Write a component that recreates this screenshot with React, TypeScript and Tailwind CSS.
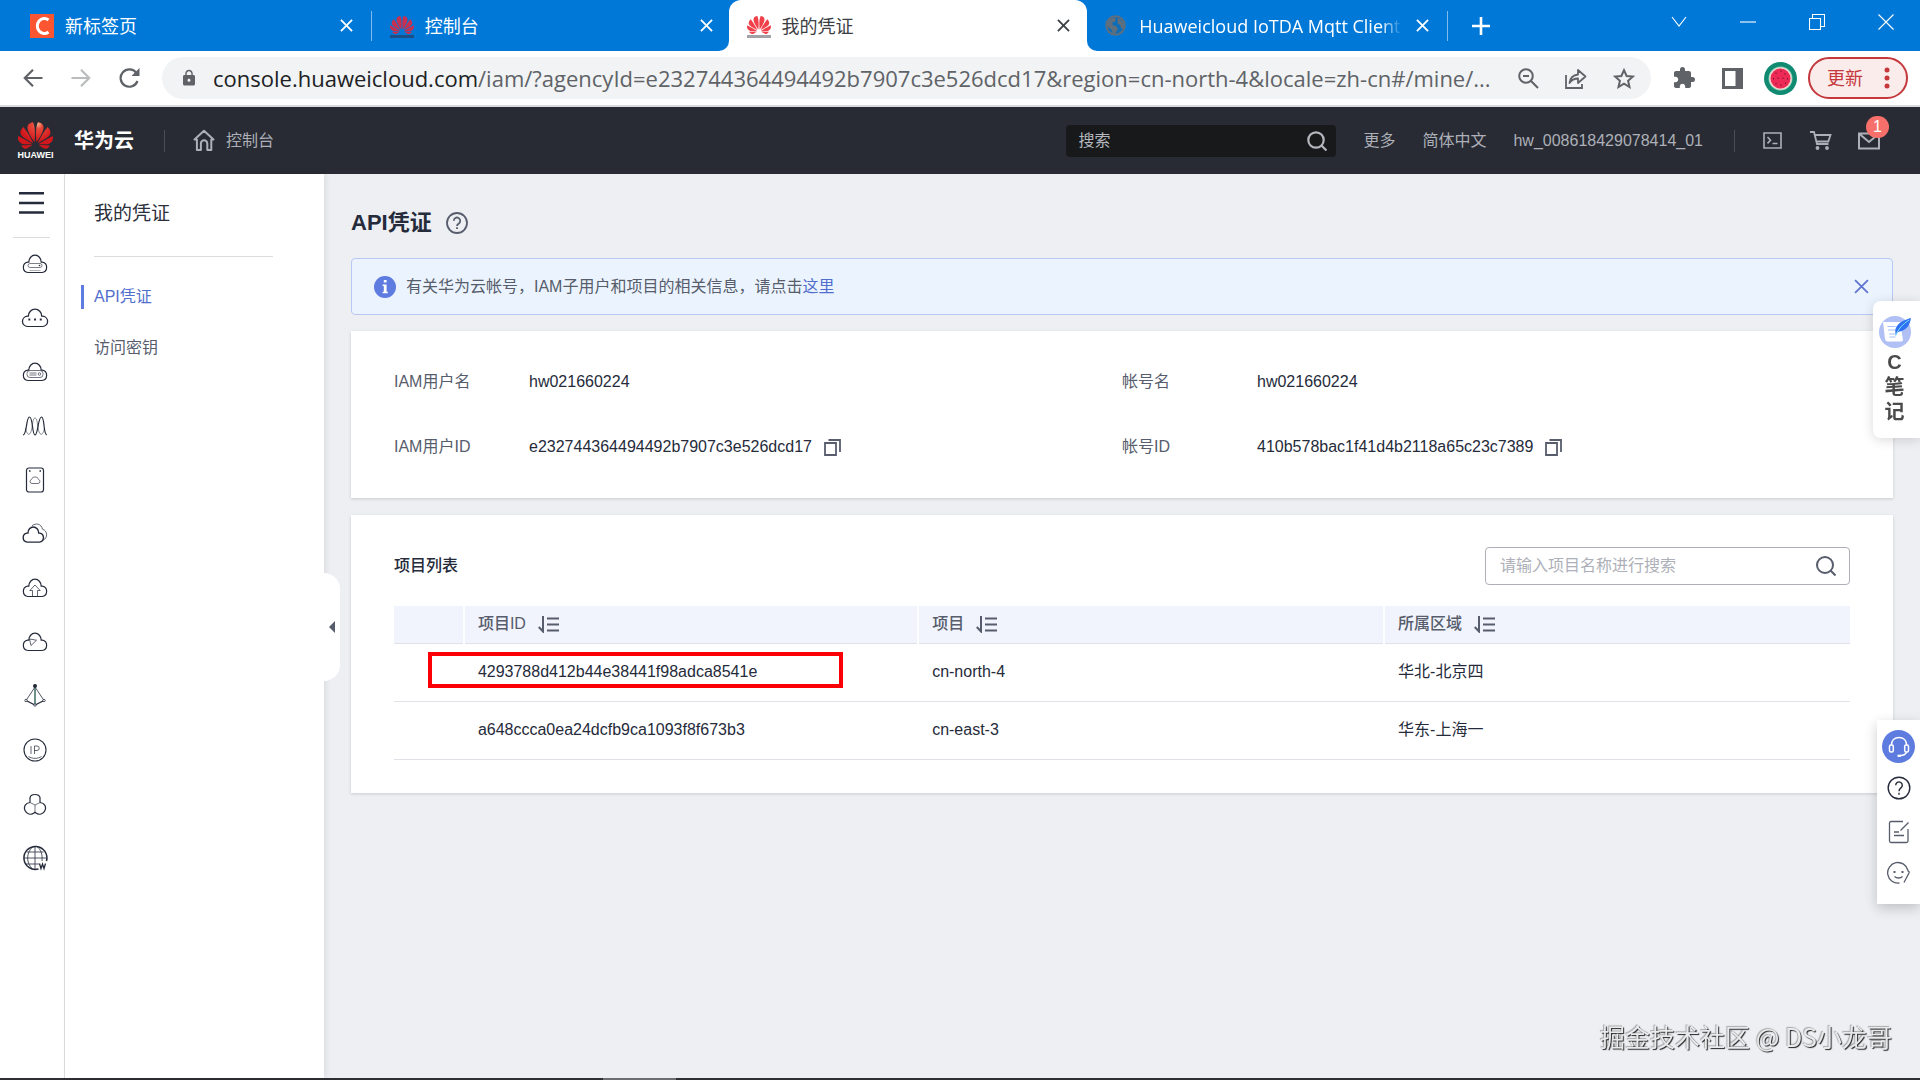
import React from "react";
import { SiHuawei } from "react-icons/si";
import { MdExtension, MdLock } from "react-icons/md";

const UI = "font-['Liberation_Sans','Noto_Sans_CJK_SC',sans-serif]";
const CHROME = "font-['Open_Sans','Noto_Sans_CJK_SC',sans-serif]";

const CLOUD = "M6 18.5H20A5.2 5.2 0 0 0 20.3 8.2H19.2A6.2 7 0 0 0 6.800 8.2H5.7A5.2 5.2 0 0 0 6 18.5z";

function CloseX({ size, width = 2 }: { size: number; width?: number }) {
  return (
    <svg width={size} height={size} viewBox="0 0 14 14" fill="none" stroke="currentColor" strokeWidth={width} aria-hidden="true">
      <path d="M1 1l12 12M13 1L1 13" />
    </svg>
  );
}

function HuaweiFavicon({ dim = false }: { dim?: boolean }) {
  return (
    <span className="flex w-6 shrink-0 flex-col items-center">
      <SiHuawei size={24} className={dim ? "-mb-0.5 text-[#c7304f]" : "-mb-0.5 text-[#f0404a]"} aria-hidden="true" />
      <span className={dim ? "h-[3px] w-6 bg-[#1c4f86]" : "h-[3px] w-6 bg-[#a2a2a6]"} />
    </span>
  );
}

function Tab({ icon, title, label, active = false }: { icon: React.ReactNode; title: string; label: string; active?: boolean }) {
  return (
    <div
      role="tab"
      aria-selected={active}
      className={
        active
          ? "relative -ml-0.5 flex h-full min-w-0 flex-1 items-center rounded-t-xl bg-white pr-4 pl-[18px] text-[#3c4043]"
          : "flex h-full min-w-0 flex-1 items-center pr-4 pl-[18px] text-white"
      }
    >
      {active && (
        <>
          <svg width="10" height="10" viewBox="0 0 10 10" className="absolute right-full bottom-0" aria-hidden="true">
            <path d="M10 0v10H0A10 10 0 0 0 10 0z" fill="#fff" />
          </svg>
          <svg width="10" height="10" viewBox="0 0 10 10" className="absolute bottom-0 left-full" aria-hidden="true">
            <path d="M0 0v10h10A10 10 0 0 1 0 0z" fill="#fff" />
          </svg>
        </>
      )}
      {icon}
      <span className="ml-[11px] min-w-0 flex-1 overflow-hidden text-[18px] leading-[26px] whitespace-nowrap">{title}</span>
      <button type="button" aria-label={label} className="ml-3 flex h-5 w-4 shrink-0 items-center justify-center">
        <CloseX size={13} />
      </button>
    </div>
  );
}

function TabBar() {
  return (
    <div className="flex h-[51px] items-stretch bg-[#0078d7] text-white">
      <div role="tablist" aria-label="标签页" className="flex w-[1448px] min-w-0 items-center pl-3">
        <Tab
          label="关闭新标签页"
          title="新标签页"
          icon={
            <span className="flex h-6 w-6 shrink-0 items-center justify-center bg-[#fc5531]">
              <svg width="18" height="20" viewBox="0 0 18 20" fill="none" stroke="#fff" strokeWidth="3" aria-hidden="true">
                <path d="M15.5 4A7 7.5 0 1 0 15.5 16" />
              </svg>
            </span>
          }
        />
        <span className="h-[30px] w-px shrink-0 bg-[#7fbbec]" />
        <Tab label="关闭控制台" title="控制台" icon={<HuaweiFavicon dim />} />
        <Tab active label="关闭我的凭证" title="我的凭证" icon={<HuaweiFavicon />} />
        <div role="tab" aria-selected={false} className="flex h-full min-w-0 flex-1 items-center pr-[17px] pl-[18px]">
          <svg width="21" height="21" viewBox="0 0 21 21" className="shrink-0" aria-hidden="true">
            <circle cx="10.5" cy="10.5" r="9.2" fill="#0f6db8" stroke="#5f6f7d" strokeWidth="2" />
            <path d="M3 6l5-3.5 3 1-1 3-3 1.5 1 2.5 3 .5 2 3-2 3-1.5 2.5-2-1-.5-3.5-3-2-2.5-3zM13 3l4 3 2 4-1 4-2-1-.5-3-2.5-1-.5-3z" fill="#5f6f7d" />
          </svg>
          <span className="ml-[13px] min-w-0 flex-1 mask-r-from-92% text-[18px] leading-[26px] whitespace-nowrap">
            Huaweicloud IoTDA Mqtt Client
          </span>
          <button type="button" aria-label="关闭 Huaweicloud IoTDA" className="ml-3 flex h-5 w-4 shrink-0 items-center justify-center">
            <CloseX size={13} />
          </button>
        </div>
        <span className="h-[30px] w-px shrink-0 bg-[#7fbbec]" />
      </div>
      <button type="button" aria-label="新建标签页" className="ml-6 flex w-[18px] items-center justify-center">
        <svg width="18" height="18" viewBox="0 0 18 18" stroke="currentColor" strokeWidth="2.6" aria-hidden="true">
          <path d="M9 0v18M0 9h18" />
        </svg>
      </button>
      <div className="ml-auto flex h-[43px] items-stretch">
        {[
          ["搜索标签页", "M1 3l7 9 7-9"],
          ["最小化", "M0 8h16"],
          ["还原", "M.5 4.5h11v11h-11zM3.5 4V.5h12v12h-3.5"],
          ["关闭", "M.5.5l15 15M15.5.5l-15 15"],
        ].map(([name, d]) => (
          <button key={name} type="button" aria-label={name} className="flex w-[69px] items-center justify-center">
            <svg width="16" height="16" viewBox="0 0 16 16" fill="none" stroke="currentColor" strokeWidth="1.1" aria-hidden="true">
              <path d={d} />
            </svg>
          </button>
        ))}
      </div>
    </div>
  );
}

function IconButton({ label, className, children }: { label: string; className: string; children: React.ReactNode }) {
  return (
    <button type="button" aria-label={label} className={"flex shrink-0 items-center justify-center " + className}>
      {children}
    </button>
  );
}

function Toolbar() {
  return (
    <div className="flex h-14 items-center border-b-2 border-[#dadbdc] bg-white pr-3 pl-[21px] text-[#5f6368]">
      <IconButton label="后退" className="w-6">
        <svg width="20" height="18" viewBox="0 0 20 18" fill="none" stroke="#5f6368" strokeWidth="2.2">
          <path d="M19.5 9H2M10 .8L1.8 9l8.2 8.2" />
        </svg>
      </IconButton>
      <IconButton label="前进" className="ml-6 w-6">
        <svg width="20" height="18" viewBox="0 0 20 18" fill="none" stroke="#babcbe" strokeWidth="2.2">
          <path d="M.5 9H18M10 .8L18.2 9 10 17.2" />
        </svg>
      </IconButton>
      <IconButton label="重新加载" className="ml-6 w-6">
        <svg width="21" height="20" viewBox="0 0 21 20" fill="none" stroke="#5f6368" strokeWidth="2.2">
          <path d="M18.5 13A8.7 8.700 0 1 1 17.3 4.8L19 6.5" />
          <path d="M20.5 0v8h-8z" fill="#5f6368" stroke="none" />
        </svg>
      </IconButton>
      <div className="ml-[21px] flex h-[42px] min-w-0 flex-1 items-center rounded-full bg-[#f1f3f4] pr-[15px] pl-[18px]">
        <MdLock size={18} className="shrink-0 text-[#5f6368]" aria-hidden="true" />
        <div role="textbox" tabIndex={0} aria-label="地址栏" className="ml-[15px] min-w-0 flex-1 overflow-hidden text-[22px] leading-[30px] whitespace-nowrap">
          <span className="text-[#202124]">console.huaweicloud.com</span>
          <span>/iam/?agencyId=e232744364494492b7907c3e526dcd17&amp;region=cn-north-4&amp;locale=zh-cn#/mine/...</span>
        </div>
        <IconButton label="缩放" className="w-6">
          <svg width="21" height="21" viewBox="0 0 21 21" fill="none" stroke="#5f6368" strokeWidth="2">
            <circle cx="8" cy="8" r="6.8" />
            <path d="M13 13l7 7M5 8h6" />
          </svg>
        </IconButton>
        <IconButton label="分享" className="ml-6 w-6">
          <svg width="22" height="21" viewBox="0 0 22 21" fill="none" stroke="#5f6368" strokeWidth="1.8">
            <path d="M1 7v13h16v-4" />
            <path d="M4.5 15c.7-5 3.8-8 8.5-8.5V2l7.5 6.5-7.5 6.5v-4.5c-3.5 0-6.5 1.5-8.5 4.5z" strokeLinejoin="round" />
          </svg>
        </IconButton>
        <IconButton label="收藏" className="ml-6 w-6">
          <svg width="22" height="21" viewBox="0 0 22 21" fill="none" stroke="#5f6368" strokeWidth="2">
            <path d="M11 2.2l2.6 5.8 6.3.6-4.8 4.2 1.4 6.2L11 15.7 5.5 19l1.4-6.2L2.1 8.6 8.400 8z" />
          </svg>
        </IconButton>
      </div>
      <IconButton label="扩展程序" className="ml-[21px] w-6">
        <MdExtension size={24} />
      </IconButton>
      <IconButton label="侧边栏" className="ml-6 w-6">
        <svg width="21" height="21" viewBox="0 0 21 21" fill="none" stroke="#5f6368" strokeWidth="3">
          <path d="M1.5 1.5h18v18h-18z" />
          <path d="M13.5 1h7v19h-7z" fill="#5f6368" stroke="none" />
        </svg>
      </IconButton>
      <IconButton label="个人资料" className="ml-5 w-[33px]">
        <svg width="33" height="33" viewBox="0 0 33 33">
          <circle cx="16.5" cy="16.5" r="16.5" fill="#118a72" />
          <circle cx="16.5" cy="16.5" r="12" fill="#7fd1b5" />
          <circle cx="16.5" cy="16.5" r="11.3" fill="#f2d5cf" />
          <circle cx="16.5" cy="16.5" r="10" fill="#ec2a55" />
          <path d="M12 10.5v1.5M17 8.5v1.5M21 11v1.5M9.5 16v1.5M14 15.5V17M19 15.5V17M23.5 16v1.5M12 21v1.5M17 22.5V24M21.5 20.5V22" stroke="#7a1631" strokeWidth="1" />
        </svg>
      </IconButton>
      <button type="button" className="ml-[11px] flex h-[42px] w-[100px] shrink-0 items-center rounded-full border-2 border-[#c5383c] bg-[#fbecec] pl-[17px] text-[18px] leading-[26px] text-[#c5383c]">
        更新
        <svg width="6" height="26" viewBox="0 0 6 26" fill="currentColor" className="ml-[21px]" aria-hidden="true">
          <circle cx="3" cy="5" r="2.5" />
          <circle cx="3" cy="13" r="2.5" />
          <circle cx="3" cy="21" r="2.5" />
        </svg>
      </button>
    </div>
  );
}

function ConsoleHeader() {
  return (
    <header className="flex h-[67px] items-center bg-[#282b33] pr-10 pl-[18px] text-[16px] text-[#adb0b8]">
      <a href="#home" className="flex items-center">
        <span className="flex w-[35px] flex-col items-center">
          <svg width="0" height="0" aria-hidden="true">
            <defs>
              <radialGradient id="petals" gradientUnits="userSpaceOnUse" cx="13.5" cy="4" r="12">
                <stop offset="0" stopColor="#f7b28a" />
                <stop offset=".3" stopColor="#e8493a" />
                <stop offset="1" stopColor="#d2171c" />
              </radialGradient>
            </defs>
          </svg>
          <SiHuawei size={35} className="-mt-1 -mb-0.5 [&_path]:fill-[url(#petals)]" aria-hidden="true" />
          <span className="text-[9px] leading-[9px] font-bold text-white">HUAWEI</span>
        </span>
        <span className="ml-[21px] text-[20px] leading-7 font-bold text-white">华为云</span>
      </a>
      <span className="ml-[30px] h-[22px] w-px bg-[#4a4d55]" />
      <a href="#console" className="ml-7 flex items-center leading-6">
        <svg width="22" height="23" viewBox="0 0 22 23" fill="none" stroke="currentColor" strokeWidth="2" aria-hidden="true">
          <path d="M1.5 10.5L11 1.8l9.5 8.7h-2.2v10.5h-4v-6.5a3.2 3.2 0 0 0-6.4 0v6.5h-4V10.5z" strokeLinejoin="round" />
        </svg>
        <span className="ml-[11px]">控制台</span>
      </a>
      <label className="ml-auto flex h-8 w-[270px] items-center rounded-sm bg-[#17191b] pr-[9px] pl-3">
        <input type="text" aria-label="搜索" placeholder="搜索" className="min-w-0 flex-1 bg-transparent leading-6 placeholder:text-[#b4b7bd] focus:outline-none" />
        <svg width="20" height="20" viewBox="0 0 20 20" fill="none" stroke="#b4b7bd" strokeWidth="2.2" aria-hidden="true">
          <circle cx="9" cy="9" r="7.7" />
          <path d="M14.5 14.5l5 5" />
        </svg>
      </label>
      <nav className="ml-[27px] flex items-center leading-6">
        <a href="#more">更多</a>
        <a href="#lang" className="ml-[27px]">简体中文</a>
        <a href="#account" className="ml-[27px]">hw_008618429078414_01</a>
      </nav>
      <span className="ml-[31px] h-[22px] w-px bg-[#4a4d55]" />
      <IconButton label="CloudShell" className="ml-[28px] w-[19px]">
        <svg width="19" height="17" viewBox="0 0 19 17" fill="none" stroke="currentColor" strokeWidth="1.6">
          <path d="M1 1h17v15H1zM4.5 5l3 3.2-3 3.2M9.500 11.5h5" />
        </svg>
      </IconButton>
      <IconButton label="购物车" className="ml-[28px] w-[22px]">
        <svg width="22" height="19" viewBox="0 0 22 19" fill="none" stroke="currentColor" strokeWidth="1.8">
          <path d="M0 1h4l3 12h11.5M5 4h15.5l-2.2 6.5H6.5" />
          <circle cx="7.5" cy="17" r="1" fill="currentColor" />
          <circle cx="17" cy="17" r="1" fill="currentColor" />
        </svg>
      </IconButton>
      <IconButton label="消息" className="relative ml-[26px] w-[22px]">
        <svg width="22" height="18" viewBox="0 0 22 18" fill="none" stroke="currentColor" strokeWidth="2">
          <path d="M1 1.5h20v15H1zM1.5 2l9.5 8 9.5-8" />
        </svg>
        <span className="absolute -top-4 left-2 flex h-[22px] w-[23px] items-center justify-center rounded-full bg-[#f66f6a] text-[16px] leading-none text-white">1</span>
      </IconButton>
    </header>
  );
}

const SERVICES: { name: string; art: React.ReactNode }[] = [
  { name: "弹性云服务器", art: <><path d={CLOUD} /><g strokeWidth=".8" opacity=".75"><rect x="6" y="9.500" width="14" height="4" rx="2" /><path d="M7.500 16.5h11" opacity=".6" /></g><circle cx="17.5" cy="11.5" r=".8" fill="currentColor" stroke="none" /></> },
  { name: "云耀云服务器", art: <g transform="translate(-1 0) scale(1.08 1)"><path d={CLOUD} /><path d="M6.800 11.500h1.800M12.100 11.500h1.800M17.400 11.500h1.800" strokeWidth="2" /></g> },
  { name: "裸金属服务器", art: <><path d={CLOUD} /><g strokeWidth=".8" opacity=".8"><rect x="5" y="8.500" width="16" height="7" rx="3" /><path d="M7.500 11h7M7.500 13h7" /><circle cx="17.5" cy="12" r="1.3" /></g></> },
  { name: "弹性伸缩", art: <><path d="M1 19C5 19 4 1 7.500 1S10 19 13 19 16 1 19.500 1 21 19 25 19" /><path d="M3.500 12C5 20 9 22 10.500 8c.8-8 4.200-8 5 0 1.500 14 5.500 12 7 4" strokeWidth=".8" opacity=".7" /></> },
  { name: "云硬盘", art: <><rect x="4.500" y="-2" width="17" height="24" rx="2.500" /><path d="M10 13.500h6a2 2 0 0 0 .6-3.900c-.6-1.900-2-2.600-3.600-2.600s-3 .7-3.600 2.600a2 2 0 0 0 .6 3.900z" strokeWidth=".8" opacity=".8" /><path d="M7 1h1.500M17.500 1H19" strokeWidth="1.500" /></> },
  { name: "云备份", art: <><g transform="translate(0 2) scale(.87)"><path d={CLOUD} strokeWidth="1.6" /></g><path d="M10 1.700C14-1.200 19-.5 20.500 5.200c5.300 1.300 5.300 9 .8 10.800" strokeWidth=".9" opacity=".8" /></> },
  { name: "对象存储", art: <><path d={CLOUD} /><path d="M10.500 18v-5.500H7.800L13 7l5.200 5.500h-2.700V18" strokeWidth=".9" opacity=".8" /></> },
  { name: "弹性文件", art: <><path d={CLOUD} /><path d="M7.500 7l7 1.200-5.500 5.300z" strokeWidth=".9" opacity=".8" /></> },
  { name: "虚拟私有云", art: <><path d="M13 1L4 14.500M13 1l9 13.500" strokeWidth=".8" /><path d="M4 14.500l9 4.500 9-4.500" /><path d="M13 1v17.500" stroke="#3d6b62" strokeWidth="1.500" /><circle cx="13" cy="0" r="1.400" fill="currentColor" /><circle cx="4" cy="14.500" r="1.200" fill="#fff" strokeWidth=".8" /><circle cx="22" cy="14.500" r="1.200" fill="#fff" strokeWidth=".8" /><circle cx="13" cy="19" r="1.200" fill="#fff" strokeWidth=".8" /></> },
  { name: "弹性公网IP", art: <><circle cx="13" cy="10" r="11" strokeWidth="1.100" /><path d="M9 6v8M12.500 14V6H15a2.200 2.200 0 0 1 0 4.500h-2.500M6.500 16.500c4 2.500 9 2.500 13 0" strokeWidth=".9" opacity=".8" /></> },
  { name: "云数据库", art: <><path d="M8 8.500V3.500C9-.5 17-.5 18 3.500v5M8 8.500C3 9 1.500 13 3 16.500c1.500 3.500 6 5 9 2.500l1-.8 1 .8c3 2.500 7.500 1 9-2.500C24.500 13 23 9 18 8.500" /><path d="M8 8.500l5 2.500 5-2.500M13 11v7" strokeWidth=".8" opacity=".8" /></> },
  { name: "域名注册", art: <><path d="M16.500 21A11.500 11.500 0 1 1 24.500 13" strokeWidth="1.500" /><path d="M1.500 10h23M13-1v22M4.500 4h17M4 16h13M10.500-1C4 5 4 15 10.500 21M15.500-1c4 3.500 5 8 4.500 14" strokeWidth=".8" /><path d="M17.500 15.500l1.500 5 1.500-4.500 1.500 4.500 1.500-5" strokeWidth="1.300" /></> },
];

function ServiceRail() {
  return (
    <nav aria-label="服务列表" className="flex w-[65px] shrink-0 flex-col border-r border-[#dcdde0] bg-white">
      <IconButton label="菜单" className="mt-[17px] ml-[19px] h-6 w-[25px]">
        <svg width="25" height="22" viewBox="0 0 25 22" stroke="#252b3a" strokeWidth="2.4">
          <path d="M0 1.200h25M0 11h25M0 20.500h25" />
        </svg>
      </IconButton>
      <span className="mt-[22px] ml-[13px] h-px w-[37px] bg-[#dcdde0]" />
      <ul className="-mt-px flex flex-col">
        {SERVICES.map((s) => (
          <li key={s.name} className="h-[54px]">
            <a href="#service" aria-label={s.name} className="flex h-full items-center justify-center pl-1.5 text-[#252b3a]">
              <svg width="26" height="26" viewBox="0 -3 26 26" fill="none" stroke="currentColor" strokeWidth="1.2" className="overflow-visible">
                {s.art}
              </svg>
            </a>
          </li>
        ))}
      </ul>
    </nav>
  );
}

function SidePanel() {
  return (
    <aside className="relative w-[259px] shrink-0 bg-white pr-[51px] pl-4 shadow-[2px_0_6px_rgba(0,0,0,0.08)]">
      <h2 className="mt-[26px] ml-[13px] text-[19px] leading-7 text-[#2b303b]">我的凭证</h2>
      <div className="mt-7 ml-[13px] h-px bg-[#dcdde0]" />
      <nav aria-label="我的凭证" className="mt-7 flex flex-col gap-[27px] text-[16px] leading-6">
        <a href="#api" aria-current="page" className="border-l-[3px] border-[#5e7ce0] pl-2.5 text-[#526ecc]">
          API凭证
        </a>
        <a href="#keys" className="pl-[13px] text-[#575d6c]">访问密钥</a>
      </nav>
      <button type="button" aria-label="收起" className="absolute top-[399px] left-full flex h-[108px] w-4 items-center justify-center rounded-r-2xl bg-white">
        <svg width="6" height="12" viewBox="0 0 6 12" fill="#575d6c">
          <path d="M6 0v12L0 6z" />
        </svg>
      </button>
    </aside>
  );
}

function CopyButton() {
  return (
    <IconButton label="复制" className="ml-3 h-6 w-[17px]">
      <svg width="17" height="17" viewBox="0 0 17 17" fill="none" stroke="#575d6c" strokeWidth="1.8">
        <path d="M1 4h11v12H1zM4.5 1H16v12" />
      </svg>
    </IconButton>
  );
}

function Field({ label, value, copy = false }: { label: string; value: string; copy?: boolean }) {
  return (
    <div className="flex h-6 items-center">
      <dt className="w-[135px] shrink-0 text-[#575d6c]">{label}</dt>
      <dd className="flex items-center text-[#252b3a]">
        {value}
        {copy && <CopyButton />}
      </dd>
    </div>
  );
}

function SortButton({ name }: { name: string }) {
  return (
    <IconButton label={"排序" + name} className="ml-3 h-5 w-[21px]">
      <svg width="21" height="17" viewBox="0 0 21 17" fill="none" stroke="#575d6c" strokeWidth="2">
        <path d="M5 0v15.5L.8 11M9 2.5h12M9 8.500h12M9 14.5h12" />
      </svg>
    </IconButton>
  );
}

const PROJECTS = [
  { id: "4293788d412b44e38441f98adca8541e", name: "cn-north-4", region: "华北-北京四" },
  { id: "a648ccca0ea24dcfb9ca1093f8f673b3", name: "cn-east-3", region: "华东-上海一" },
];

function ProjectTable() {
  return (
    <table className="mt-[21px] w-full table-fixed border-collapse text-left text-[#252b3a]">
      <colgroup>
        <col className="w-[4.8%]" />
        <col className="w-[31.2%]" />
        <col className="w-[32%]" />
        <col className="w-[32%]" />
      </colgroup>
      <thead>
        <tr className="h-[37px] border-b border-[#dfe1e6] bg-[#f1f4fd] text-[#575d6c]">
          <td />
          {["项目ID", "项目", "所属区域"].map((h) => (
            <th key={h} scope="col" className="border-l-2 border-white/80 pl-[13px] font-medium">
              <span className="flex items-center">
                {h}
                <SortButton name={h} />
              </span>
            </th>
          ))}
        </tr>
      </thead>
      <tbody>
        {PROJECTS.map((p, i) => (
          <tr key={p.id} className="h-[58px] border-b border-[#dfe1e6]">
            <td />
            <td className="relative pl-3.5">
              {p.id}
              {i === 0 && <span className="pointer-events-none absolute top-2 -left-9 h-9 w-[415px] border-4 border-[#fb0007]" />}
            </td>
            <td className="pl-3.5">{p.name}</td>
            <td className="pl-3.5">{p.region}</td>
          </tr>
        ))}
      </tbody>
    </table>
  );
}

function Main() {
  return (
    <main className="min-w-0 flex-1 px-[27px] text-[16px] leading-6">
      <div className="flex h-[84px] items-center pt-[14px]">
        <h1 className="text-[22px] leading-8 font-bold text-[#252b3a]">API凭证</h1>
        <IconButton label="帮助" className="ml-3.5 w-[22px]">
          <svg width="22" height="22" viewBox="0 0 22 22" fill="none" stroke="#575d6c" strokeWidth="1.8">
            <circle cx="11" cy="11" r="10" />
            <path d="M7.8 8.700a3.200 3.200 0 1 1 5 2.700c-1.200.8-1.800 1.300-1.800 2.600M11 15.200v1.8" />
          </svg>
        </IconButton>
      </div>

      <div className="flex h-[57px] items-center rounded-sm border border-[#b9c8f3] bg-[#ebf4fe] pr-[23px] pl-[22px] text-[#575d6c]">
        <svg width="22" height="22" viewBox="0 0 22 22" aria-hidden="true">
          <circle cx="11" cy="11" r="11" fill="#5e7ce0" />
          <path d="M9.800 4h2.800v2.600H9.800zM8.600 8.500h4v7.200h1.200v1.600H8.600v-1.600h1.200v-5.600H8.600z" fill="#fff" />
        </svg>
        <p className="ml-2.5">
          有关华为云帐号，IAM子用户和项目的相关信息，请点击<a href="#docs" className="text-[#526ecc]">这里</a>
        </p>
        <IconButton label="关闭提示" className="ml-auto h-6 w-4 text-[#6075d0]">
          <CloseX size={15} width={1.7} />
        </IconButton>
      </div>

      <section className="mt-4 bg-white px-[43px] py-[39px] shadow-[0_1px_3px_rgba(0,0,0,0.15)]">
        <dl className="grid grid-cols-2 gap-y-[41px]">
          <Field label="IAM用户名" value="hw021660224" />
          <Field label="帐号名" value="hw021660224" />
          <Field label="IAM用户ID" value="e232744364494492b7907c3e526dcd17" copy />
          <Field label="帐号ID" value="410b578bac1f41d4b2118a65c23c7389" copy />
        </dl>
      </section>

      <section className="mt-[17px] bg-white px-[43px] pt-8 pb-[33px] shadow-[0_1px_3px_rgba(0,0,0,0.15)]">
        <div className="flex items-center justify-between">
          <h2 className="font-medium text-[#252b3a]">项目列表</h2>
          <label className="flex h-[38px] w-[365px] items-center rounded-sm border border-[#adb0b8] bg-white pr-[13px] pl-[14px]">
            <input
              type="text"
              aria-label="请输入项目名称进行搜索"
              placeholder="请输入项目名称进行搜索"
              className="min-w-0 flex-1 placeholder:text-[#adb0b8] focus:outline-none"
            />
            <svg width="20" height="20" viewBox="0 0 20 20" fill="none" stroke="#575d6c" strokeWidth="2" aria-hidden="true">
              <circle cx="9" cy="9" r="8" />
              <path d="M14.5 14.5l5 5" />
            </svg>
          </label>
        </div>
        <ProjectTable />
      </section>
    </main>
  );
}

function NotesWidget() {
  return (
    <button type="button" className="fixed top-[301px] right-0 flex h-[137px] w-[47px] flex-col items-center rounded-l-lg bg-white pt-[14px] pr-1 text-[20px] leading-[25px] font-bold text-[#4a4a4a] shadow-[0_2px_12px_rgba(0,0,0,0.15)]">
      <svg width="34" height="34" viewBox="0 0 34 34" className="shrink-0" aria-hidden="true">
        <circle cx="17" cy="17" r="16" fill="#b0c0f5" />
        <path d="M5 7h17l3 18a2 2 0 0 1-2 1.500H10a3 3 0 0 1-3-2.500z" fill="#fff" />
        <path d="M9.500 11.500h8M10 15h8M11 19h7M11.500 22h6" stroke="#a9c0f7" strokeWidth="1.2" />
        <path d="M18 20c-2-6 0-13 15-17-1 5-2 8-5 10.500-3 2.500-6 3-8 3.500z" fill="#2f72f3" />
        <path d="M17.500 21C20 14 25 9 31 5" stroke="#7fe0ff" strokeWidth="1" fill="none" />
      </svg>
      <span className="mt-px">C</span>
      <span>笔</span>
      <span>记</span>
    </button>
  );
}

function SupportDock() {
  return (
    <div className="fixed top-[720px] right-0 flex h-[184px] w-[43px] flex-col items-center bg-white pt-[10px] shadow-[0_4px_12px_rgba(0,0,0,0.2)]">
      <IconButton label="在线客服" className="h-[33px] w-[33px] rounded-full bg-[#5e7ce0]">
        <svg width="22" height="22" viewBox="0 0 22 22" fill="none" stroke="#fff" strokeWidth="1.5">
          <path d="M3.500 9C3.500 4.500 6.500 1.500 11 1.500S18.500 4.500 18.500 9M18.500 16c-.8 2.500-3 3.500-6 3.500" />
          <rect x="1.500" y="9" width="3.800" height="7" rx="1.500" />
          <rect x="16.700" y="9" width="3.800" height="7" rx="1.500" />
          <path d="M9.500 19.800h3.500" strokeWidth="2.200" />
        </svg>
      </IconButton>
      <IconButton label="帮助中心" className="mt-[13px] h-6 w-6">
        <svg width="24" height="24" viewBox="0 0 24 24" fill="none" stroke="#252b3a" strokeWidth="1.4">
          <circle cx="12" cy="12" r="10.800" />
          <path d="M8.700 9.200a3.300 3.300 0 1 1 5.200 2.700c-1.300.9-1.900 1.600-1.900 3.300M12 16.800v2" />
        </svg>
      </IconButton>
      <IconButton label="建议" className="mt-5 h-6 w-6">
        <svg width="22" height="24" viewBox="0 0 22 24" fill="none" stroke="#575d6c" strokeWidth="1.3">
          <path d="M15 1.500H3a1.500 1.500 0 0 0-1.500 1.500v18A1.500 1.500 0 0 0 3 22.500h15.500A1.500 1.500 0 0 0 20 21V9M20.500 2.500l-8 8M6 12h5M6 15.500h10" />
        </svg>
      </IconButton>
      <IconButton label="满意度评价" className="mt-[17px] h-6 w-6">
        <svg width="24" height="24" viewBox="0 0 24 24" fill="none" stroke="#575d6c" strokeWidth="1.3">
          <path d="M12.500 22A10.300 10.300 0 1 1 21 9.500" />
          <path d="M22.500 11l-5.500 10.500M22.500 11l-2-1.500M7.500 15.500c2 2 6 2 8 0" />
          <path d="M6.500 11h2M14.500 11h2" strokeWidth="2" />
        </svg>
      </IconButton>
    </div>
  );
}

export default function App() {
  return (
    <div className={"flex min-h-screen flex-col bg-[#edeff3] " + UI}>
      <div className={CHROME}>
        <TabBar />
        <Toolbar />
      </div>
      <ConsoleHeader />
      <div className="flex flex-1">
        <ServiceRail />
        <SidePanel />
        <Main />
      </div>
      <div className="flex h-0.5 bg-[#2e2f33]">
        <span className="ml-[31.4%] w-[3.8%] bg-[#6d6e72]" />
      </div>
      <NotesWidget />
      <SupportDock />
      <p className="fixed right-7 bottom-[26px] font-['Noto_Sans_CJK_SC',sans-serif] text-[25px] leading-9 text-[#e9eaec] [text-shadow:1px_1px_1px_#222,-1px_-1px_1px_#aaa]">
        掘金技术社区 @ DS小龙哥
      </p>
    </div>
  );
}
